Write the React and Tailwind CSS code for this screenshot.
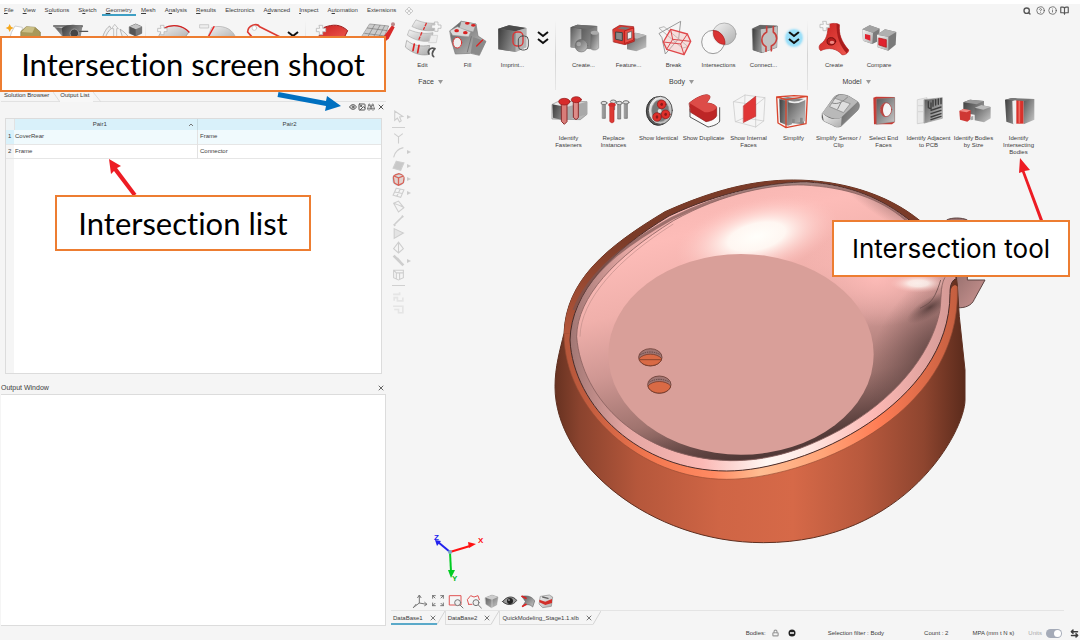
import React from "react";
import { Search, CircleHelp, Info, BookOpen, X, Lock, ArrowLeftRight, Eye, Image, Binoculars } from "lucide-react";

/* Shared paint servers for all toolbar drawings */
function Defs() {
  return (
    <svg className="absolute h-0 w-0" aria-hidden="true">
      <defs>
        <linearGradient id="mt" x1="0" y1="0" x2="1" y2="1">
          <stop offset="0" stopColor="#585858" /><stop offset="1" stopColor="#c9c9c9" />
        </linearGradient>
        <linearGradient id="md" x1="0" y1="0" x2="1" y2="0.4">
          <stop offset="0" stopColor="#3c3c3c" /><stop offset="1" stopColor="#8d8d8d" />
        </linearGradient>
        <linearGradient id="ml" x1="0" y1="0" x2="1" y2="1">
          <stop offset="0" stopColor="#f4f4f4" /><stop offset="1" stopColor="#adadad" />
        </linearGradient>
        <linearGradient id="rd" x1="0" y1="0" x2="1" y2="1">
          <stop offset="0" stopColor="#c81e1e" /><stop offset="1" stopColor="#f05a50" />
        </linearGradient>
      </defs>
    </svg>
  );
}

const Ic = ({ children, small }) => (
  <svg viewBox={small ? "0 0 48 48" : "0 0 108 108"} className={small ? "h-4 w-4 shrink-0 overflow-visible" : "h-9 w-9 shrink-0 overflow-visible"} fill="none" strokeLinejoin="round" strokeLinecap="round" aria-hidden="true">
    {children}
  </svg>
);

const Plus = ({ x, y }) => (
  <path transform={`translate(${x} ${y})`} d="M-5-14H5V-5H14V5H5V14H-5V5H-14V-5H-5Z" fill="#f7f7f7" stroke="#bbb" strokeWidth="2.5" />
);

const icons = {
  part: (
    <Ic>
      <path d="M14 36L24 18L46 22L44 60H8Z" fill="#fff" stroke="#bbb" strokeWidth="2" />
      <path d="M42 34L58 20L84 22L100 36V64H42Z" fill="#a8995a" stroke="#857842" strokeWidth="2" />
      <path d="M58 20L84 22L76 38L44 36Z" fill="#cbbf86" />
      <path d="M8 12L12 20L20 24L12 28L8 36L4 28L-4 24L4 20Z" fill="#f5a71c" />
    </Ic>
  ),
  mid: (
    <Ic>
      <path d="M-4 18H82L72 30" stroke="#555" strokeWidth="4" />
      <path d="M0 22L24 50L44 60L60 30Z" fill="url(#mt)" stroke="#777" strokeWidth="2" />
      <path d="M20 24C40 10 70 14 82 20L76 56H24Z" fill="url(#md)" />
      <circle cx="58" cy="40" r="13" fill="#444" stroke="#999" strokeWidth="3" />
      <path d="M74 34H98" stroke="#555" strokeWidth="4" />
    </Ic>
  ),
  move: (
    <Ic>
      <path d="M36 14L46 26H41V50H32V26H27Z" fill="#f4f4f4" stroke="#aaa" strokeWidth="2" />
      <path d="M0 48C6 30 14 22 20 18L24 26C16 34 10 42 8 52ZM52 28C62 34 70 42 78 52H60Z" fill="#eee" stroke="#999" strokeWidth="2" />
      <path d="M80 20L98 12L116 20V40L98 48L80 40Z" fill="#777" stroke="#555" strokeWidth="2" />
      <path d="M80 20L98 12L116 20L98 28Z" fill="#c4c4c4" />
      <path d="M98 28V48L80 40V20Z" fill="#555" />
    </Ic>
  ),
  surfAdd: (
    <Ic>
      <path d="M24 26C52 10 84 16 102 36L84 60H6Z" fill="url(#ml)" stroke="#888" strokeWidth="2" />
      <path d="M24 26C52 10 84 16 102 36" stroke="#d62020" strokeWidth="4" />
      <Plus x="22" y="30" />
    </Ic>
  ),
  surfCut: (
    <Ic>
      <path d="M36 22C66 14 92 24 104 46V62H20Z" fill="url(#ml)" stroke="#aaa" strokeWidth="2" />
      <path d="M42 20L22 56" stroke="#e22" strokeWidth="4" />
      <path d="M0 14H26V24H0Z" fill="#eee" stroke="#bbb" strokeWidth="2" />
    </Ic>
  ),
  curve: (
    <Ic>
      <path d="M8 36C8 16 36 8 44 20L104 50M8 36L20 50" stroke="#dc3a32" strokeWidth="5" />
      <circle cx="28" cy="24" r="7" fill="#fff" stroke="#bbb" strokeWidth="2" />
    </Ic>
  ),
  redAdd: (
    <Ic>
      <path d="M28 22C54 12 76 12 98 32L84 60H6Z" fill="url(#rd)" stroke="#9c1c1c" strokeWidth="3" />
      <Plus x="18" y="30" />
    </Ic>
  ),
  meshEdit: (
    <Ic>
      <path d="M30 12L86 18L66 66L2 56Z" fill="#ccc" stroke="#888" strokeWidth="2" />
      <path d="M44 14L18 60M60 16L34 62M74 17L50 64M22 24L82 32M14 40L76 48" stroke="#777" strokeWidth="2" />
      <path d="M96 16L72 48L66 72L86 56L104 22Z" fill="#d92a2a" />
      <circle cx="99" cy="13" r="6" fill="#b88" />
    </Ic>
  ),
  edit: (
    <Ic>
      <path d="M34 0C58 10 78 10 94 10L86 32C62 34 42 30 22 20Z" fill="url(#ml)" stroke="#aaa" strokeWidth="2" />
      <path d="M14 30C38 40 60 42 84 38L80 62C54 68 28 60 8 46Z" fill="url(#ml)" stroke="#aaa" strokeWidth="2" />
      <path d="M6 62C26 78 50 80 74 76L70 104C44 108 20 98 2 82Z" fill="url(#ml)" stroke="#999" strokeWidth="2" />
      <path d="M64 10L56 28M50 38L42 58" stroke="#d33" strokeWidth="4" strokeDasharray="8 6" />
      <path d="M28 72L24 92M42 76L38 98" stroke="#d22" strokeWidth="5" />
      <Plus x="94" y="20" />
      <path d="M78 46H98L94 68H72Z" fill="#eee" stroke="#ccc" strokeWidth="2" />
      <path d="M90 86C76 80 66 92 72 102M90 86C80 96 80 106 86 110" stroke="#555" strokeWidth="5" />
    </Ic>
  ),
  fill: (
    <Ic>
      <path d="M0 32L34 4L78 12L84 48L108 64L88 106L62 100L16 102L4 62Z" fill="url(#mt)" stroke="#777" strokeWidth="2" />
      <path d="M34 4L78 12L70 36L28 26Z" fill="#c9c9c9" stroke="#888" strokeWidth="1.5" />
      <path d="M0 32L22 20L62 36L56 50L8 46Z" fill="#dadada" stroke="#999" strokeWidth="1.5" />
      <path d="M70 52L108 64L88 106L62 98Z" fill="#8a8a8a" />
      <path d="M64 50L52 96" stroke="#666" strokeWidth="2" />
      <ellipse cx="20" cy="32" rx="7" ry="5" fill="#d92222" />
      <ellipse cx="46" cy="38" rx="7" ry="5" fill="#d92222" />
      <ellipse cx="52" cy="10" rx="7" ry="4" fill="#d92222" />
      <ellipse cx="70" cy="16" rx="7" ry="4" fill="#d92222" />
      <ellipse cx="22" cy="68" rx="13" ry="16" fill="#eee" stroke="#d33" strokeWidth="3" />
      <path d="M80 78L98 60" stroke="#d22" strokeWidth="4" />
    </Ic>
  ),
  imprint: (
    <Ic>
      <path d="M10 26L42 16L94 24V82L62 96L10 88Z" fill="url(#mt)" />
      <path d="M10 26L42 16L94 24L62 34Z" fill="#4c4c4c" />
      <path d="M10 26L62 34V96L10 88Z" fill="url(#md)" />
      <path d="M62 34L94 24V82L62 96Z" fill="#b4b4b4" />
      <rect x="54" y="36" width="30" height="42" rx="12" stroke="#d33" strokeWidth="4" />
      <rect x="70" y="48" width="30" height="42" rx="12" stroke="#555" strokeWidth="3" />
    </Ic>
  ),
  create: (
    <Ic>
      <path d="M14 22L34 14L94 18V34L74 88L14 82Z" fill="url(#md)" />
      <path d="M14 22L34 14L94 18L70 28Z" fill="#6e6e6e" />
      <path d="M14 22L46 27V88L14 82Z" fill="url(#mt)" />
      <path d="M74 38V86C80 92 92 92 98 84V40Z" fill="url(#mt)" stroke="#777" strokeWidth="1.5" />
      <ellipse cx="86" cy="38" rx="12" ry="6" fill="#ababab" />
      <circle cx="46" cy="77" r="19" fill="url(#mt)" stroke="#666" strokeWidth="1.5" />
      <circle cx="38" cy="72" r="7" fill="#ccc" opacity=".5" />
    </Ic>
  ),
  feature: (
    <Ic>
      <path d="M48 50L74 38L106 46V82L76 94L48 88Z" fill="url(#mt)" />
      <path d="M48 50L74 38L106 46L78 56Z" fill="#b9b9b9" />
      <path d="M6 28L26 16L68 20L70 64L42 74L8 66Z" fill="#d93830" stroke="#9c1717" strokeWidth="2" />
      <path d="M15 36L34 38V62L15 58Z" fill="#8a8a8a" stroke="#444" strokeWidth="3" />
      <path d="M20 26L32 20L58 23L46 29Z" fill="#777" />
      <path d="M42 32L68 24V60L42 70Z" fill="#e65048" stroke="#a11" strokeWidth="2" />
      <path d="M50 38L62 34V54L50 58Z" fill="#eee" stroke="#555" strokeWidth="2" />
    </Ic>
  ),
  brk: (
    <Ic>
      <path d="M10 40L74 4L68 56L28 102L18 54Z" stroke="#888" strokeWidth="2.5" />
      <path d="M10 24L24 20L96 80L80 84Z" stroke="#999" strokeWidth="2" />
      <path d="M44 28L94 42L104 64L84 104L32 88L22 66Z" fill="#f6b5b0" fillOpacity=".35" stroke="#e0474a" strokeWidth="4" />
      <path d="M44 28L50 58L104 64M50 58L32 88M94 42L74 72L84 104M22 66L74 72" stroke="#dd4a4e" strokeWidth="3" />
    </Ic>
  ),
  inter: (
    <Ic>
      <ellipse cx="70" cy="42" rx="35" ry="33" fill="url(#ml)" stroke="#999" strokeWidth="2" />
      <ellipse cx="36" cy="66" rx="34" ry="35" fill="#fafafa" fillOpacity=".75" stroke="#888" strokeWidth="2.5" />
      <path d="M37 32C55 30 74 50 72 73C52 74 34 56 37 32Z" fill="#d93434" stroke="#a22" strokeWidth="2" />
    </Ic>
  ),
  connect: (
    <Ic>
      <path d="M20 26L42 16L94 18L92 82L48 98L22 90Z" fill="url(#mt)" stroke="#555" strokeWidth="2" />
      <path d="M44 28L94 18L92 82L48 98Z" fill="#c2c2c2" />
      <path d="M20 26L42 30L46 98L22 90Z" fill="url(#md)" />
      <path d="M42 28L20 26L42 16L94 18L76 24Z" fill="#666" />
      <path d="M62 20V36C42 48 44 72 60 80V94M82 20V36C96 46 96 68 76 78V92" stroke="#c9403c" strokeWidth="5" />
    </Ic>
  ),
  tri: (
    <Ic>
      <path d="M36 14C50 8 62 10 70 14C68 44 76 64 98 90C98 98 88 106 78 104C62 86 40 80 14 92C8 88 8 76 14 72C32 60 36 40 36 14Z" fill="url(#rd)" stroke="#b52020" strokeWidth="2" />
      <path d="M62 10L70 14C68 44 76 64 98 90L92 100C72 78 60 50 62 10Z" fill="#a91c1c" />
      <ellipse cx="46" cy="64" rx="13" ry="11" fill="#b51d1d" stroke="#731010" strokeWidth="3" />
      <ellipse cx="48" cy="67" rx="7" ry="5" fill="#ee8a84" />
      <Plus x="26" y="18" />
    </Ic>
  ),
  compare: (
    <Ic>
      <path d="M4 28L26 16L56 26L54 62L34 72L6 62Z" fill="#7a7a7a" />
      <path d="M4 28L36 38L34 72L6 62Z" fill="url(#ml)" />
      <path d="M4 28L26 16L56 26L36 38Z" fill="#a2a2a2" />
      <path d="M12 42L28 46V62L12 56Z" fill="#e02330" />
      <path d="M48 44L72 28L106 36L104 74L82 92L50 82Z" fill="#7a7a7a" />
      <path d="M48 44L82 50V92L50 82Z" fill="url(#ml)" />
      <path d="M48 44L72 28L106 36L82 50Z" fill="#b0b0b0" />
      <path d="M54 54L76 59V82L54 75Z" fill="#e02330" stroke="#a11" strokeWidth="2" />
    </Ic>
  ),
  fasteners: (
    <Ic>
      <path d="M4 34L24 24L108 26V64L88 80L4 78Z" fill="url(#ml)" stroke="#888" strokeWidth="2" />
      <path d="M4 34L46 42V84L6 74Z" fill="url(#md)" />
      <path d="M46 42L108 26V64L46 82Z" fill="#a9a9a9" />
      <path d="M32 30H48V86L40 94L32 86Z" fill="#d87c78" stroke="#8c2c2c" strokeWidth="3" />
      <path d="M68 24H82V74L75 80L68 74Z" fill="#dd8c88" stroke="#8c2c2c" strokeWidth="3" />
      <ellipse cx="40" cy="26" rx="17" ry="10" fill="#d72b2b" stroke="#8d1717" strokeWidth="2" />
      <ellipse cx="76" cy="20" rx="15" ry="9" fill="#d72b2b" stroke="#8d1717" strokeWidth="2" />
    </Ic>
  ),
  replace: (
    <Ic>
      {[[24, 30, 76], [52, 26, 50], [70, 30, 78], [90, 28, 76]].map(([x, y, b]) => (
        <g key={x}>
          <path d={`M${x - 4} ${y}H${x + 4}V${b}H${x - 4}Z`} fill="#999" stroke="#666" strokeWidth="2" />
          <ellipse cx={x} cy={y} rx="9" ry="5" fill="#ddd" stroke="#777" strokeWidth="3" />
        </g>
      ))}
      <path d="M42 36H54V86L48 90L42 86Z" fill="#dd3a34" stroke="#b22" strokeWidth="2" />
      <ellipse cx="48" cy="35" rx="11" ry="6" fill="#d22b2b" />
    </Ic>
  ),
  identical: (
    <Ic>
      <ellipse cx="52" cy="54" rx="36" ry="43" fill="#555" stroke="#333" strokeWidth="3" />
      <ellipse cx="58" cy="52" rx="36" ry="42" fill="url(#ml)" stroke="#555" strokeWidth="3" />
      <ellipse cx="58" cy="53" rx="26" ry="33" fill="#777" stroke="#999" strokeWidth="2" />
      {[[62, 34], [48, 72], [74, 64]].map(([x, y]) => (
        <g key={x}>
          <ellipse cx={x} cy={y} rx="13" ry="13" fill="#df2f2a" stroke="#8c1a1a" strokeWidth="2" />
          <ellipse cx={x} cy={y} rx="4" ry="5" fill="#8c1a1a" />
        </g>
      ))}
      <ellipse cx="56" cy="54" rx="6" ry="6" fill="#ddd" />
    </Ic>
  ),
  duplicate: (
    <Ic>
      <path d="M12 48V72L66 102C78 100 98 94 101 84V44" stroke="#555" strokeWidth="3" fill="#fafafa" />
      <path d="M10 30C26 16 54 2 66 6C80 10 66 22 62 30C70 30 90 34 92 44V68C86 80 72 84 60 86L14 58Z" fill="#bd2626" stroke="#8d1717" strokeWidth="2" />
      <path d="M10 30C26 16 54 2 66 6C80 10 66 22 62 30C70 30 90 34 92 44C82 56 68 58 56 58Z" fill="#dd4c48" />
    </Ic>
  ),
  internal: (
    <Ic>
      <path d="M8 26L42 6L102 14L98 84L74 102L14 86ZM8 26L74 36L102 14M74 36V102M42 6L40 74L14 86M40 74L98 84" stroke="#c4c4c4" strokeWidth="2" />
      <path d="M38 38L74 10V70L38 88Z" fill="#e03636" stroke="#bb2525" strokeWidth="2" />
    </Ic>
  ),
  simplify: (
    <Ic>
      <path d="M14 16L36 12L84 18V94L14 88Z" fill="#888" />
      <path d="M10 18L36 26V98L12 88Z" fill="url(#md)" />
      <path d="M36 26L88 20V84L80 86V74H72V88L56 90V78H48V94L36 98Z" fill="url(#mt)" />
      <path d="M40 26C56 30 70 28 84 20" stroke="#eee" strokeWidth="5" />
      <path d="M2 12L54 8L94 10L90 92L30 104L6 90ZM2 12L30 20L94 10M30 20V104" stroke="#d9452e" strokeWidth="4" />
    </Ic>
  ),
  sensor: (
    <Ic>
      <path d="M4 62L38 14C50 0 70 4 84 10L110 26C118 34 116 46 108 54L60 100C50 104 42 102 34 96L8 84C2 78 2 68 4 62Z" fill="url(#md)" stroke="#777" strokeWidth="2" />
      <path d="M4 60L38 14C50 2 70 4 84 10L110 26L62 72C50 84 20 74 4 60Z" fill="#b9b9b9" />
      <path d="M26 40L42 16L88 32L68 58Z" fill="#dedede" stroke="#999" strokeWidth="3" />
      <path d="M34 30C50 36 66 26 80 12M38 18L52 6M50 48L60 28" stroke="#888" strokeWidth="3" />
      <path d="M4 60C20 78 50 84 62 72L60 100C50 104 42 102 34 96L8 84Z" fill="url(#ml)" />
    </Ic>
  ),
  endFace: (
    <Ic>
      <path d="M22 14L30 11L86 12V88L78 94H24Z" fill="#c93a33" />
      <path d="M32 18L86 14V86L32 94Z" fill="url(#mt)" stroke="#888" strokeWidth="1.5" />
      <ellipse cx="60" cy="50" rx="17" ry="21" fill="#f5f5f5" stroke="#a33" strokeWidth="2" />
      <path d="M60 29C38 32 38 68 60 71C48 62 48 40 60 29Z" fill="#b94540" />
    </Ic>
  ),
  pcb: (
    <Ic>
      <path d="M20 20L48 14V88L20 92Z" fill="#e9e9e9" stroke="#c5c5c5" strokeWidth="2" />
      <path d="M40 20L94 14V76L40 90Z" fill="url(#mt)" stroke="#999" strokeWidth="2" />
      <path d="M52 26V44L60 48V30M66 22V40M74 20V36M82 18V34M90 16V32M60 52L90 42M60 62L90 52M60 72L90 62M60 80L90 70" stroke="#3d3d3d" strokeWidth="4" />
      <path d="M22 38H38M22 56H38" stroke="#ccc" strokeWidth="2" />
    </Ic>
  ),
  size: (
    <Ic>
      <path d="M22 28L42 20L84 24V58L60 66L22 60Z" fill="url(#md)" />
      <path d="M22 28L42 20L84 24L62 34Z" fill="#999" />
      <path d="M10 54L22 48L44 52V78L34 86L12 80Z" fill="#cf3834" />
      <path d="M10 54L22 48L44 52L32 58Z" fill="#ee8a84" />
      <path d="M56 44L76 36L104 42V76L84 88L56 82Z" fill="url(#mt)" />
      <path d="M56 44L76 36L104 42L82 50Z" fill="#bbb" />
      <path d="M42 72L52 68V80L44 82Z" fill="#aaa" />
    </Ic>
  ),
  intersecting: (
    <Ic>
      <path d="M12 20L30 16H46L38 26V94L16 86Z" fill="url(#md)" />
      <path d="M34 24L46 20V92H36Z" fill="#efefef" />
      <path d="M46 20H68V92H46Z" fill="#d9322c" />
      <path d="M55 24V88" stroke="#ee6a60" strokeWidth="5" />
      <path d="M68 20L100 18V80L68 94Z" fill="url(#mt)" />
      <path d="M12 20L34 15L100 18L68 24Z" fill="#777" />
    </Ic>
  ),
};

const Tool = ({ icon, label, name }) => (
  <button aria-label={name || label} className="flex w-[45px] shrink-0 flex-col items-center gap-[6px]">
    {icons[icon]}
    {label && <span>{label}</span>}
  </button>
);

const More = ({ glow }) => (
  <button aria-label="More tools" className="flex h-9 w-4 shrink-0 items-center justify-center">
    <svg viewBox="0 0 16 16" className={glow ? "h-4 w-4 rounded-lg bg-[#5fd0fa]/60 shadow-[0_0_3px_#36c6ff]" : "h-4 w-4"} fill="none" stroke="#111" strokeWidth="2">
      <path d="M3 2L8 6L13 2M3 9L8 13L13 9" />
    </svg>
  </button>
);

const Group = ({ label, width, children }) => (
  <section className={`flex shrink-0 flex-col items-center ${width}`}>
    <div className="flex h-[58px] items-start">{children}</div>
    {label && (
      <button className="flex items-center gap-1 text-[7px]">
        {label}
        <svg viewBox="0 0 5 4" className="h-1 w-[5px]"><path d="M0 0H5L2.5 4Z" fill="#999" /></svg>
      </button>
    )}
  </section>
);

const Sep = () => <div className="h-[70px] w-px shrink-0 bg-linear-to-b from-[#f5f5f5] via-[#d4d4d4] to-[#e6e6e6]" />;

const menus = [
  ["", "F", "ile"], ["", "V", "iew"], ["S", "o", "lutions"], ["S", "k", "etch"], ["", "G", "eometry"], ["", "M", "esh"],
  ["A", "n", "alysis"], ["", "R", "esults"], ["Electronics", "", ""], ["A", "d", "vanced"], ["", "I", "nspect"], ["A", "u", "tomation"], ["Extensions", "", ""],
];

function MenuBar() {
  return (
    <header className="flex h-[13px] items-center justify-between pl-1 pr-[11px]">
      <nav className="flex items-center gap-[9px]">
        {menus.map(([a, u, b]) => (
          <button key={a + u + b} className={u === "G" ? "-mx-1 border-b-2 border-[#3f9fc4] px-1 pt-[2px]" : ""}>
            {a}<u>{u}</u>{b}
          </button>
        ))}
        <button aria-label="Add menu">
          <svg viewBox="0 0 8 8" className="h-2 w-2" fill="none" stroke="#ccc"><path d="M4 0L6 2L4 4L2 2ZM4 4L6 6L4 8L2 6ZM0 4L2 2L4 4L2 6ZM8 4L6 2L4 4L6 6Z" /></svg>
        </button>
      </nav>
      <div className="flex items-center gap-[3px] text-[#555]">
        <button aria-label="Search"><Search className="h-2 w-2" strokeWidth={4} /></button>
        <button aria-label="Help" className="ml-[2px]"><CircleHelp className="h-[9px] w-[9px]" strokeWidth={2} /></button>
        <button aria-label="About"><Info className="h-[9px] w-[9px]" strokeWidth={2} /></button>
        <button aria-label="Manual"><BookOpen className="h-[9px] w-[9px]" strokeWidth={3} /></button>
      </div>
    </header>
  );
}

function Ribbon() {
  return (
    <div className="flex h-[72px] items-start pt-[3px]">
      <Group width="w-[145px]">
        <div className="flex gap-[3px]"><Tool icon="part" name="New part" /><Tool icon="mid" name="Midsurface" /><Tool icon="move" name="Move" /></div>
      </Group>
      <Sep />
      <Group width="w-[159px]">
        <Tool icon="surfAdd" name="Add surface" /><Tool icon="surfCut" name="Trim surface" /><Tool icon="curve" name="Curve" /><More />
      </Group>
      <Sep />
      <Group label="Face" width="w-[249px]">
        <Tool icon="redAdd" name="Create face" /><Tool icon="meshEdit" name="Remesh face" /><Tool icon="edit" label="Edit" />
        <Tool icon="fill" label="Fill" /><Tool icon="imprint" label="Imprint..." /><More />
      </Group>
      <Sep />
      <Group label="Body" width="w-[251px]">
        <Tool icon="create" label="Create..." /><Tool icon="feature" label="Feature..." /><Tool icon="brk" label="Break" />
        <Tool icon="inter" label="Intersections" /><Tool icon="connect" label="Connect..." /><More glow />
      </Group>
      <Sep />
      <Group label="Model" width="w-[97px]">
        <Tool icon="tri" label="Create" /><Tool icon="compare" label="Compare" />
      </Group>
    </div>
  );
}

function LeftPanel() {
  return (
    <aside className="flex w-[386px] shrink-0 flex-col pl-px">
      <div className="flex h-[13px] items-start border-b border-[#e2e2e2] pt-[3px] text-[#333]" role="tablist">
        <button role="tab" className="pl-[3px] pr-1">Solution Browser</button>
        <svg viewBox="0 0 7 10" className="h-[10px] w-[7px]" fill="none" stroke="#ddd"><path d="M0 0L7 10" /></svg>
        <button role="tab" aria-selected="true" className="h-[10px] bg-[#f7f7f7] pb-[3px] pr-1">Output List</button>
        <svg viewBox="0 0 8 10" className="h-[10px] w-2" fill="none" stroke="#ddd"><path d="M0 0L8 10" /></svg>
      </div>
      <div className="flex h-4 items-start justify-end gap-px pr-px pt-px text-[#555]">
        <button aria-label="Show"><Eye className="h-2 w-2" strokeWidth={3} /></button>
        <button aria-label="Capture"><Image className="h-2 w-2" strokeWidth={3} /></button>
        <button aria-label="Find"><Binoculars className="h-2 w-2" strokeWidth={2} /></button>
        <button aria-label="Close list" className="ml-px"><X className="h-2 w-2" strokeWidth={3} /></button>
      </div>
      <div className="ml-1 mr-1 flex h-[256px] flex-col border border-[#dcdcdc] bg-white">
        <table className="w-full table-fixed border-collapse text-left">
          <thead>
            <tr className="h-[11px] bg-[#d9f1fa]">
              <th className="w-2 border-r border-[#e2e2e2] bg-[#eef3f5]" aria-label="Row" />
              <th className="border-r border-[#c5dbe3] font-normal">
                <div className="flex items-center justify-center">
                  <span className="flex-1 pr-1 text-center">Pair1</span>
                  <svg viewBox="0 0 4 3" className="mr-1 h-[3px] w-1" fill="none" stroke="#777"><path d="M0 3L2 1L4 3" /></svg>
                </div>
              </th>
              <th className="text-center font-normal">Pair2</th>
            </tr>
          </thead>
          <tbody>
            <tr className="h-[14px] border-b border-[#e6e6e6] bg-[#f0fafd]">
              <td className="bg-[#d9f1fa] pl-[2px]">1</td><td className="border-r border-[#e2e2e2] pl-px">CoverRear</td><td className="pl-[2px]">Frame</td>
            </tr>
            <tr className="h-[14px] border-b border-[#e6e6e6]">
              <td className="bg-[#f5f5f5] pl-[2px]">2</td><td className="border-r border-[#e2e2e2] pl-px">Frame</td><td className="pl-[2px]">Connector</td>
            </tr>
          </tbody>
        </table>
        <div className="w-2 flex-1 bg-[#f5f5f5]" />
      </div>
      <div className="flex h-5 items-center justify-between pr-px pt-[7px]">
        <h2 className="text-[7px]">Output Window</h2>
        <button aria-label="Close output"><X className="h-2 w-2" color="#666" strokeWidth={3} /></button>
      </div>
      <div className="flex-1 border border-l-0 border-[#dcdcdc] bg-white" />
    </aside>
  );
}

const strip = [
  { n: "Point", d: <path d="M4 3L12 9L20 3M12 9V21" /> },
  { n: "Edge", a: 1, d: <path d="M3 21C5 11 12 5 21 3" /> },
  { n: "Face", a: 1, d: <path d="M8 4L22 7L16 21L2 17Z" fill="#c8c8c8" /> },
  { n: "Body", a: 1, on: 1, d: <path d="M2 5L13 1L23 5L21 18L12 23L4 18ZM2 5L12 9L23 5M12 9V23" stroke="#d9655a" fill="#e3d3cf" strokeWidth="2.5" /> },
  { n: "Mesh", a: 1, d: <path d="M8 4L22 7L16 21L2 17ZM15 6L9 19M5 11L19 14" /> },
  { n: "Patch", d: <path d="M3 6L12 2L22 14L12 22ZM3 6C10 8 16 11 22 14" /> },
  { n: "Line", d: <path d="M5 19L19 5M3 19L6 22M18 3L21 6" strokeWidth="3" /> },
  { n: "Shell", d: <path d="M4 3L21 11L4 21Z" fill="#e4e4e4" /> },
  { n: "Solid", d: <path d="M12 2L21 14L12 22L3 14ZM12 2V22" /> },
  { n: "Connector", a: 1, d: <path d="M3 3L21 21M9 8L16 16" strokeWidth="5" /> },
  { n: "Assembly", d: <path d="M3 4H21V18L12 22L3 18ZM3 4L8 9H21M8 9V20M14 9V21" /> },
];

const StripBtn = ({ n, a, d, on }) => (
  <button aria-label={n} className="flex items-center gap-[2px]">
    <svg viewBox="0 0 24 24" className={on ? "h-[13px] w-[13px] rounded-full bg-[#c4e6f0]" : "h-[13px] w-[13px]"} fill="none" stroke="#cecece" strokeWidth="2">{d}</svg>
    {a && <svg viewBox="0 0 4 4" className="h-1 w-1"><path d="M0 0L4 2L0 4Z" fill="#ccc" /></svg>}
  </button>
);

function Strip() {
  return (
    <div className="flex w-[26px] shrink-0 flex-col items-start pl-[6px] pt-[21px]">
      <StripBtn n="Select" a={1} d={<path d="M5 2V19L10 15L14 22L17 20L14 13L20 12Z" />} />
      <div className="my-1 h-px w-[13px] bg-[#d0d0d0]" />
      <div className="flex h-[149px] flex-col justify-between">{strip.map((s) => <StripBtn key={s.n} {...s} />)}</div>
      <div className="my-1 h-px w-[13px] bg-[#d0d0d0]" />
      <div className="flex flex-col opacity-40">
        <StripBtn n="Group" d={<path d="M2 8H14V4M4 20V14H10V20H20V14" strokeWidth="3" />} />
        <StripBtn n="Ungroup" d={<path d="M2 6H20V18H12V12H4M12 18H20" strokeWidth="3" />} />
      </div>
    </div>
  );
}

const tools = [
  ["fasteners", "Identify Fasteners"], ["replace", "Replace Instances"], ["identical", "Show Identical"], ["duplicate", "Show Duplicate"],
  ["internal", "Show Internal Faces"], ["simplify", "Simplify"], ["sensor", "Simplify Sensor / Clip"], ["endFace", "Select End Faces"],
  ["pcb", "Identify Adjacent to PCB"], ["size", "Identify Bodies by Size"], ["intersecting", "Identify Intersecting Bodies"],
];

function Model() {
  return (
    <svg viewBox="0 0 1380 1170" className="h-[390px] w-[460px] shrink-0" fill="none" role="img" aria-label="Cover and frame model">
      <defs>
        <linearGradient id="side" x1="45" x2="1275" y1="0" y2="0" gradientUnits="userSpaceOnUse">
          <stop offset="0" stopColor="#673221" /><stop offset=".06" stopColor="#8a432e" /><stop offset=".2" stopColor="#b5573b" />
          <stop offset=".4" stopColor="#cf6545" /><stop offset=".58" stopColor="#d66948" /><stop offset=".75" stopColor="#b8593d" />
          <stop offset=".9" stopColor="#8e452f" /><stop offset="1" stopColor="#5b2b1c" />
        </linearGradient>
        <linearGradient id="rimO" x1="72" x2="1250" y1="0" y2="0" gradientUnits="userSpaceOnUse">
          <stop offset="0" stopColor="#b5563a" /><stop offset=".06" stopColor="#c25c3e" /><stop offset=".22" stopColor="#f47850" /><stop offset=".38" stopColor="#ff8a62" />
          <stop offset=".5" stopColor="#ffbd92" /><stop offset=".66" stopColor="#ffa478" /><stop offset=".8" stopColor="#ff7d55" /><stop offset="1" stopColor="#c55f40" />
        </linearGradient>
        <linearGradient id="rimTop" x1="0" x2="0" y1="490" y2="200" gradientUnits="userSpaceOnUse">
          <stop offset="0" stopColor="#b5563a" /><stop offset="1" stopColor="#7a3b28" />
        </linearGradient>
        <linearGradient id="rimP" x1="88" x2="1230" y1="0" y2="0" gradientUnits="userSpaceOnUse">
          <stop offset="0" stopColor="#a07673" /><stop offset=".15" stopColor="#e4a6a2" /><stop offset=".35" stopColor="#fbb9b5" />
          <stop offset=".52" stopColor="#fff8f4" /><stop offset=".62" stopColor="#ffe9e4" /><stop offset=".8" stopColor="#fcb8b4" /><stop offset="1" stopColor="#d59a96" />
        </linearGradient>
        <linearGradient id="bowl" x1="420" y1="40" x2="620" y2="870" gradientUnits="userSpaceOnUse">
          <stop offset="0" stopColor="#f5b4b0" /><stop offset=".18" stopColor="#fdbcb8" /><stop offset=".4" stopColor="#f0b0ab" />
          <stop offset=".6" stopColor="#cf9793" /><stop offset=".8" stopColor="#a0746f" /><stop offset="1" stopColor="#4b3432" />
        </linearGradient>
        <linearGradient id="hook" x1="1240" y1="330" x2="1330" y2="400" gradientUnits="userSpaceOnUse">
          <stop offset="0" stopColor="#9a7270" /><stop offset="1" stopColor="#c99390" />
        </linearGradient>
        <radialGradient id="hi"><stop offset="0" stopColor="#fffffb" /><stop offset=".35" stopColor="#fffaf5" stopOpacity=".95" /><stop offset="1" stopColor="#ffc4c0" stopOpacity="0" /></radialGradient>
        <radialGradient id="pk"><stop offset="0" stopColor="#fdbbb7" /><stop offset="1" stopColor="#fdbbb7" stopOpacity="0" /></radialGradient>
        <radialGradient id="dk"><stop offset="0" stopColor="#4f3836" stopOpacity=".85" /><stop offset="1" stopColor="#6a4c4a" stopOpacity="0" /></radialGradient>
        <clipPath id="bowlClip">
          <path d="M110 500C112 380 225 262 400 152C550 68 700 42 790 45C920 52 1020 85 1095 150C1200 230 1230 270 1210 340C1203 365 1203 395 1198 430C1170 560 1060 690 900 780C780 845 680 873 570 872C300 865 125 690 110 500Z" />
        </clipPath>
      </defs>
      <path d="M1220 150C1235 142 1265 142 1282 150V330H1335L1303 388C1296 406 1275 415 1252 413Z" fill="url(#hook)" stroke="#5d4341" strokeWidth="3" />
      <path d="M72 490C78 330 200 230 375 125C520 60 640 30 760 30C900 30 1040 70 1140 152C1210 210 1245 270 1252 345L1258 440L1275 600V690C1275 780 1100 1118 670 1118C330 1118 45 880 45 650C45 590 60 540 72 490Z" fill="url(#side)" stroke="#5e2f20" strokeWidth="3" />
      <path d="M72 490C78 330 200 230 375 125C520 60 640 30 760 30C900 30 1040 70 1140 152L1110 165L110 490Z" fill="url(#rimTop)" />
      <path d="M72 490H90C108 700 320 903 560 903C800 903 1230 700 1230 370C1234 342 1248 342 1252 350C1266 750 790 928 560 928C300 928 72 720 72 490Z" fill="url(#rimO)" />
      <path d="M72 490C72 720 300 928 560 928C790 928 1266 750 1252 350" stroke="#954a32" strokeWidth="2" />
      <path d="M90 510C94 365 215 242 387 138C540 65 700 36 800 36C930 43 1030 88 1110 152L1230 300L1250 325C1238 330 1230 340 1230 370C1230 700 800 903 560 903C300 903 100 710 90 510Z" fill="url(#rimP)" stroke="#4a2d2a" strokeWidth="3" />
      <path d="M102 420C150 300 262 220 396 145C550 68 700 40 800 41C920 48 1020 86 1100 152" stroke="#7a5451" strokeWidth="9" opacity=".7" />
      <g clipPath="url(#bowlClip)">
        <rect width="1380" height="1170" fill="url(#bowl)" />
        <ellipse cx="1010" cy="320" rx="230" ry="150" fill="url(#pk)" />
        <ellipse cx="1190" cy="560" rx="190" ry="280" fill="url(#dk)" transform="rotate(25 1190 560)" />
        <ellipse cx="620" cy="870" rx="440" ry="90" fill="url(#dk)" />
        <ellipse cx="1060" cy="85" rx="230" ry="70" fill="url(#dk)" transform="rotate(32 1060 85)" opacity=".6" />
        <ellipse cx="650" cy="200" rx="250" ry="112" fill="url(#hi)" transform="rotate(-14 650 200)" />
        <ellipse cx="1135" cy="340" rx="85" ry="28" fill="url(#hi)" opacity=".8" />
        <ellipse cx="1170" cy="412" rx="80" ry="28" fill="url(#dk)" transform="rotate(-32 1170 412)" />
      </g>
      <ellipse cx="603" cy="553" rx="398" ry="301" fill="#d99f99" />
      <path d="M110 500C112 380 225 262 400 152C550 68 700 42 790 45C920 52 1020 85 1095 150M1215 322C1198 350 1206 395 1198 430C1170 560 1060 690 900 780C780 845 680 873 570 872C300 865 125 690 110 500" stroke="#8a625f" strokeWidth="2.5" />
      <path d="M120 500C122 390 232 268 400 162" stroke="#c08e8a" strokeWidth="2" />
      <path d="M1202 330C1182 396 1168 400 1140 415" stroke="#6b4e4c" strokeWidth="2.5" />
      {[[331, 562], [358, 644]].map(([x, y]) => (
        <g key={x}>
          <ellipse cx={x} cy={y} rx="35" ry="26" fill="#a07572" stroke="#6a3d35" strokeWidth="2.5" />
          <path d={`M${x - 34} ${y + 4}C${x - 20} ${y - 14} ${x + 20} ${y - 14} ${x + 34} ${y + 4}C${x + 28} ${y + 32} ${x - 28} ${y + 32} ${x - 34} ${y + 4}Z`} fill="#d96a45" stroke="#6a3020" strokeWidth="2" />
          <path d={`M${x - 30} ${y - 8}Q${x} ${y - 24} ${x + 30} ${y - 8}`} stroke="#5c4240" strokeWidth="3" strokeDasharray="4 3" />
        </g>
      ))}
      <path d="M300 569H362" stroke="#6a3020" strokeWidth="2" />
    </svg>
  );
}

function Triad() {
  return (
    <svg viewBox="0 0 60 56" className="h-14 w-[60px] shrink-0" role="img" aria-label="Axes">
      <g strokeWidth="2">
        <path d="M20 24L40 18" stroke="#f11" /><path d="M20 24L21 44" stroke="#0c2" /><path d="M20 24L8 14" stroke="#22e" />
      </g>
      <path d="M46 16L38 14L39 20Z" fill="#f11" /><path d="M21 50L18 42L25 42Z" fill="#0c2" /><path d="M5 12L7 18L11 13Z" fill="#22e" />
      <circle cx="20" cy="24" r="2" fill="#7da7c4" />
      <g className="font-['Liberation_Sans',sans-serif] text-[8px] font-bold">
        <text x="48" y="15" fill="#f11">X</text><text x="22" y="53" fill="#0b2">Y</text><text x="4" y="12" fill="#22e">Z</text>
      </g>
    </svg>
  );
}

const views = [
  ["Axes", <path key="a" d="M22 8V30L6 42M22 30L44 34M17 14L22 6L27 14M12 34L4 44M38 28L45 34L38 38" stroke="#777" strokeWidth="3" />],
  ["Fit", <path key="b" d="M8 8H16M8 8V16M8 8L15 15M40 8H32M40 8V16M40 8L33 15M8 38H16M8 38V30M8 38L15 31M40 38H32M40 38V30M40 38L33 31" stroke="#777" strokeWidth="3" />],
  ["Zoom box", <g key="c" strokeWidth="3"><path d="M5 8H39V36H5Z" stroke="#e05555" /><circle cx="29" cy="29" r="9" fill="#eee" stroke="#777" /><path d="M36 36L45 45" stroke="#777" /></g>],
  ["Zoom lasso", <g key="d" strokeWidth="3"><path d="M8 34L4 20L14 8L24 12L36 8L40 20M8 34H18" stroke="#e05555" /><circle cx="30" cy="29" r="9" fill="#eee" stroke="#777" /><path d="M37 36L46 45" stroke="#777" /></g>],
  ["View cube", <g key="e"><path d="M4 14L24 6L42 12L38 36L22 44L6 34Z" fill="url(#mt)" stroke="#888" /><path d="M4 14L24 6L42 12L24 20Z" fill="#ccc" /><path d="M24 20V44" stroke="#ddd" strokeWidth="2" /></g>],
  ["Visibility", <g key="f"><path d="M2 26C14 8 34 8 44 22C34 38 14 38 2 26Z" fill="#999" stroke="#444" strokeWidth="3" /><circle cx="24" cy="24" r="9" fill="#222" /><circle cx="21" cy="21" r="2" fill="#fff" /></g>],
  ["Section", <g key="g"><path d="M6 10C24 6 38 12 44 24L38 42C30 34 20 32 8 40L16 26Z" fill="url(#mt)" stroke="#666" strokeWidth="2" /><path d="M6 10L18 16M8 40L18 34" stroke="#d22" strokeWidth="5" /></g>],
  ["Display", <g key="h"><path d="M8 10L34 6L44 12L40 40L14 44L4 34Z" fill="url(#ml)" stroke="#888" strokeWidth="2" /><path d="M4 20L22 26L42 18V30L22 36L4 28Z" fill="#d22f2a" /><path d="M14 12L30 16" stroke="#666" strokeWidth="4" /></g>],
];

function Viewport() {
  return (
    <main className="flex min-w-0 flex-1 flex-col">
      <div className="flex h-[68px] justify-end pr-[39px] pt-1">
        {tools.map(([i, l]) => <Tool key={i} icon={i} label={l} />)}
      </div>
      <div className="flex flex-1 items-start justify-between pr-20 pt-[13px]">
        <div className="flex h-full items-end pb-2 pl-[18px]"><Triad /></div>
        <Model />
      </div>
      <div className="flex h-[18px] items-center gap-[2px]">
        {views.map(([n, d]) => <button key={n} aria-label={n}><Ic small>{d}</Ic></button>)}
      </div>
      <div className="-ml-[21px] mr-4 flex h-4 border-t border-[#e4e4e4]">
        {["DataBase1", "DataBase2", "QuickModeling_Stage1.1.slb"].map((t, i) => (
          <div key={t} className="flex items-start">
            <div className={i === 0 ? "flex h-[14px] items-center gap-[6px] border-b-2 border-[#5aa9c9] pl-[2px] pt-[2px]" : "flex h-[14px] items-center gap-[6px] border-b border-l border-[#dedede] pl-[2px] pt-px"}>
              <button>{t}</button>
              <button aria-label={`Close ${t}`}><X className="h-2 w-2" strokeWidth={3} color="#777" /></button>
            </div>
            <svg viewBox="0 0 8 14" className="h-[14px] w-2" fill="none" stroke="#d4d4d4"><path d="M0 13.5L8 0" /></svg>
          </div>
        ))}
      </div>
    </main>
  );
}

function StatusBar() {
  return (
    <footer className="flex h-[14px] items-center justify-end pr-px">
      <span>Bodies:</span>
      <Lock className="ml-[6px] h-2 w-[7px]" color="#999" strokeWidth={4} />
      <svg viewBox="0 0 8 8" className="ml-[9px] h-2 w-2"><circle cx="4" cy="4" r="3.5" fill="#222" /><path d="M2 4H6" stroke="#fff" strokeWidth="1.5" /></svg>
      <span className="ml-8">Selection filter : Body</span>
      <span className="ml-10">Count : 2</span>
      <span className="ml-6">MPA (mm t N s)</span>
      <label className="ml-[14px] flex items-center gap-1 text-[#aaa]">
        Units
        <input type="checkbox" defaultChecked className="peer sr-only" />
        <span className="flex h-[9px] w-4 items-center justify-end rounded-full bg-[#a5abb8] p-px"><span className="h-[7px] w-[7px] rounded-full bg-white" /></span>
      </label>
      <button aria-label="Swap units" className="ml-2"><ArrowLeftRight className="h-[9px] w-[9px]" strokeWidth={4} /></button>
    </footer>
  );
}

const callout = "absolute z-10 flex items-center justify-center whitespace-nowrap border-2 border-[#ed7d31] bg-white text-black [font-variant-ligatures:none]";

function Annotations() {
  return (
    <>
      <svg className="pointer-events-none absolute left-0 top-0 z-10 h-[640px] w-[1080px]" viewBox="0 0 1080 640" aria-hidden="true">
        <path d="M278.500 92L326 101L327 96L341 106L325 111L326 106L277.500 97Z" fill="#0070c0" />
        <path d="M136.500 194L117 168L121 166L109 159L111 174L114 171L133 196Z" fill="#ed1c24" />
        <path d="M1043 220L1024.500 171L1030 170L1020 158L1019 173L1022 172L1040 221Z" fill="#ed1c24" />
      </svg>
      <div className={`${callout} left-0 top-9 h-14 w-[386px] font-['Lato',sans-serif] text-[31px]`}>Intersection screen shoot</div>
      <div className={`${callout} left-[55px] top-[195px] h-14 w-[256px] font-['Lato',sans-serif] text-[31px]`}>Intersection list</div>
      <div className={`${callout} left-[832px] top-[220px] h-[57px] w-[238px] font-['Inter',sans-serif] text-[26px]`}>Intersection tool</div>
    </>
  );
}

export default function App() {
  return (
    <div className="relative overflow-hidden font-['Liberation_Sans',Arial,sans-serif] text-[6px] leading-[7px] text-[#3c3c3c]">
      <Defs />
      <div className="flex min-h-screen flex-col border-t-4 border-white bg-[#f5f5f5]">
        <MenuBar />
        <Ribbon />
        <div className="flex flex-1">
          <LeftPanel />
          <Strip />
          <Viewport />
        </div>
        <StatusBar />
      </div>
      <Annotations />
    </div>
  );
}
